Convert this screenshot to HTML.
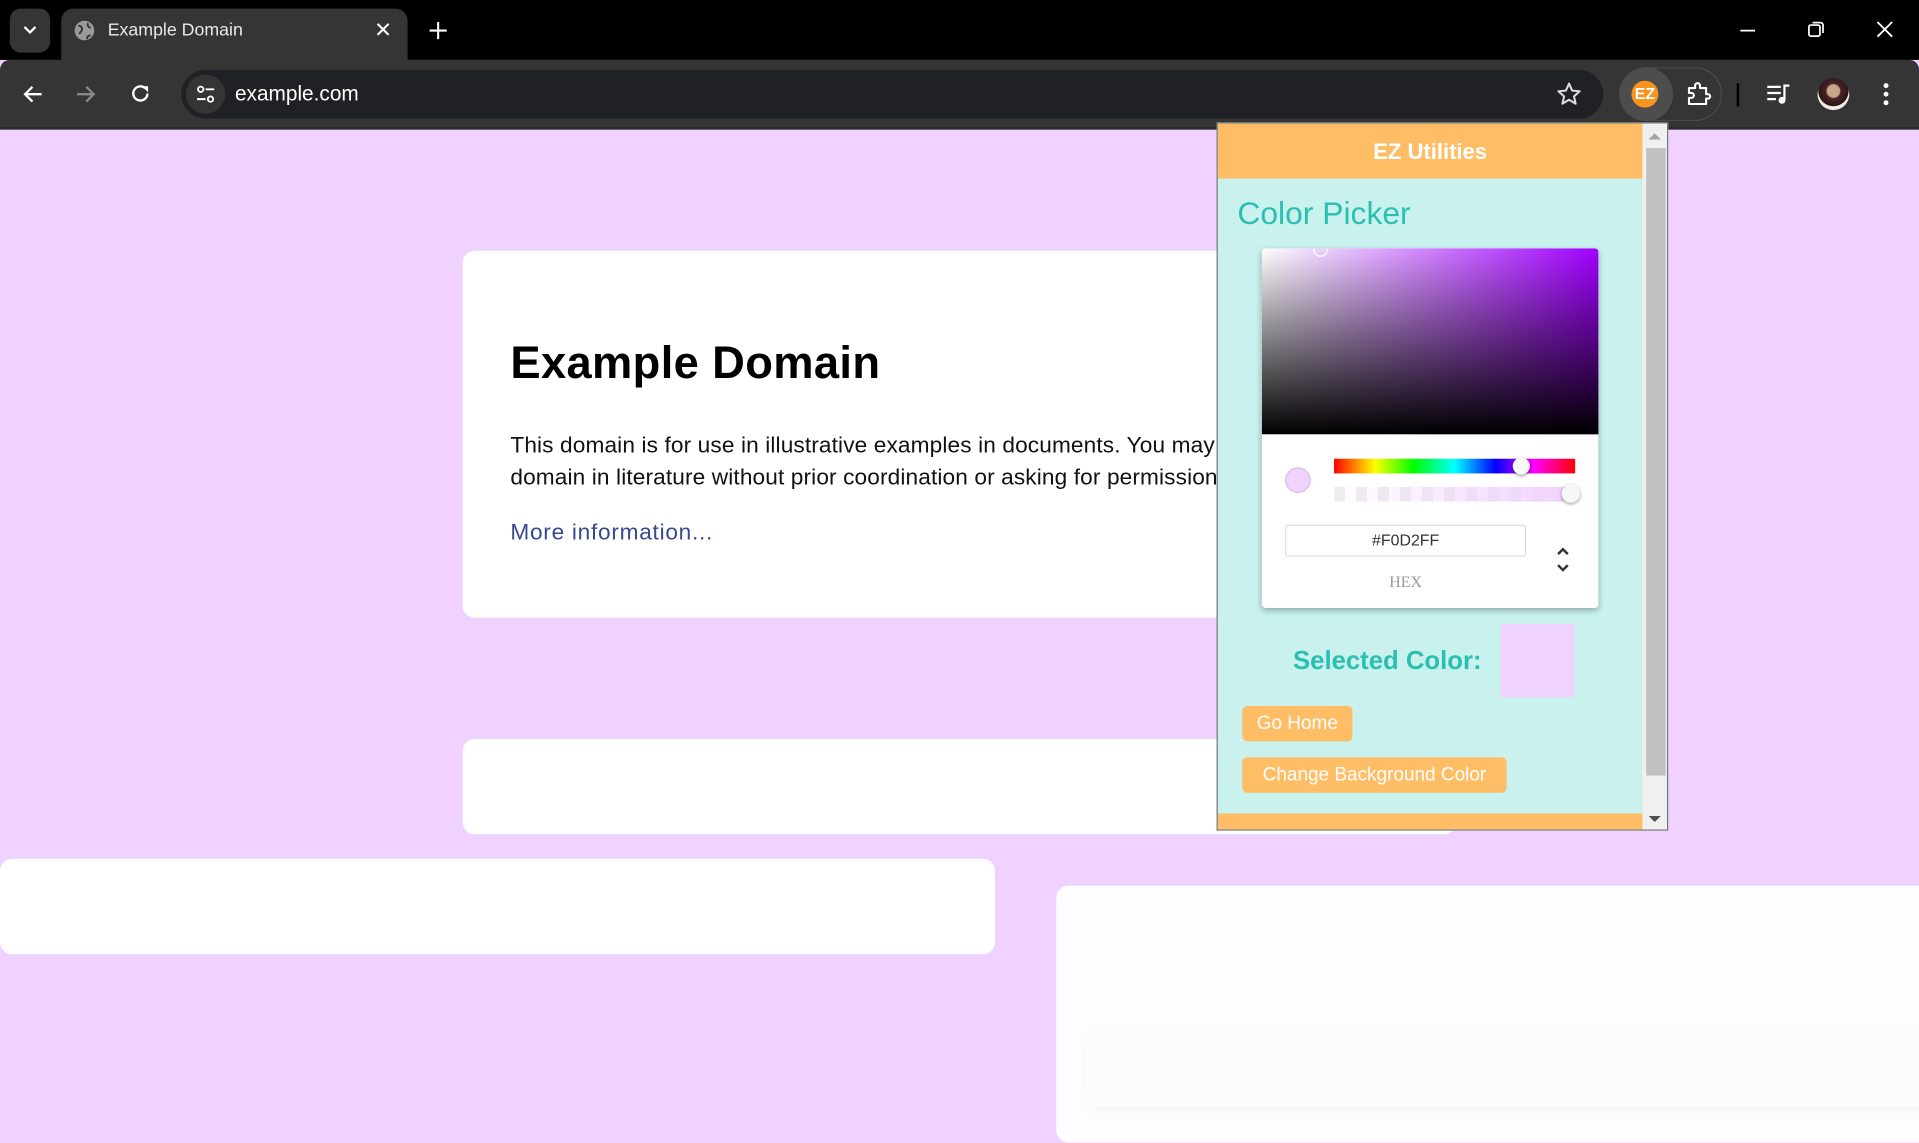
<!DOCTYPE html>
<html><head><meta charset="utf-8"><style>
html,body{margin:0;padding:0;width:1919px;height:1123px;overflow:hidden;background:#efd2ff;}
#s{position:absolute;left:0;top:0;width:1568px;height:918px;transform:scale(1.2239,1.2233);transform-origin:0 0;font-family:"Liberation Sans",sans-serif;}
.a{position:absolute;}
.card{position:absolute;background:#fff;border-radius:10px;}
</style></head><body><div id="s">
<!-- tab bar -->
<div class="a" style="left:0;top:0;width:1568px;height:49px;background:#000;"></div>
<div class="a" style="left:8px;top:7px;width:33px;height:36px;background:#353535;border-radius:9px;"></div>
<svg class="a" style="left:18px;top:19px" width="13" height="10" viewBox="0 0 13 10"><path d="M2 3l4.5 4.5L11 3" stroke="#fff" stroke-width="1.8" fill="none"/></svg>
<div class="a" style="left:50px;top:7px;width:283px;height:44px;background:#353535;border-radius:10px 10px 0 0;"></div>
<svg class="a" style="left:60px;top:16px" width="18" height="18" viewBox="0 0 18 18"><circle cx="9" cy="9" r="8" fill="#9a9a9a"/><path d="M4 5c2 0 3 1 3 3s-2 2-2 4M12 3c-1 2 0 3 2 4M11 16c0-2 1-3 3-3" stroke="#353535" stroke-width="1.6" fill="none"/></svg>
<div class="a" style="left:88px;top:17px;color:#e8e8e8;font-size:14.5px;">Example Domain</div>
<svg class="a" style="left:307px;top:18px" width="12" height="12" viewBox="0 0 12 12"><path d="M1.5 1.5l9 9M10.5 1.5l-9 9" stroke="#fff" stroke-width="1.7"/></svg>
<svg class="a" style="left:350px;top:17px" width="16" height="16" viewBox="0 0 16 16"><path d="M8 1v14M1 8h14" stroke="#fff" stroke-width="1.7"/></svg>
<svg class="a" style="left:1420px;top:17px" width="16" height="16"><path d="M2 8h12" stroke="#fff" stroke-width="1.4"/></svg>
<svg class="a" style="left:1476px;top:16px" width="16" height="16"><rect x="2" y="4.5" width="9" height="9" rx="1.5" fill="none" stroke="#fff" stroke-width="1.4"/><path d="M5 2.5h6.5a2 2 0 0 1 2 2V11" fill="none" stroke="#fff" stroke-width="1.4"/></svg>
<svg class="a" style="left:1532px;top:16px" width="16" height="16"><path d="M2 2l12 12M14 2L2 14" stroke="#fff" stroke-width="1.5"/></svg>
<!-- toolbar -->
<div class="a" style="left:0;top:49px;width:1568px;height:56px;background:#353535;border-radius:8px 8px 0 0;"></div>
<div class="a" style="left:0;top:104px;width:1568px;height:2px;background:#2a2a2a;"></div>
<svg class="a" style="left:17px;top:67px" width="20" height="20" viewBox="0 0 20 20"><path d="M17 10H4M9.5 4L3.5 10l6 6" stroke="#fff" stroke-width="1.9" fill="none"/></svg>
<svg class="a" style="left:60px;top:67px" width="20" height="20" viewBox="0 0 20 20"><path d="M3 10h13M10.5 4l6 6-6 6" stroke="#8a8a8a" stroke-width="1.9" fill="none"/></svg>
<svg class="a" style="left:105px;top:67px" width="20" height="20" viewBox="0 0 20 20"><path d="M15.5 9.5A5.8 5.8 0 1 1 13.5 5" stroke="#fff" stroke-width="1.9" fill="none"/><path d="M11 3.5h5v5z" fill="#fff"/></svg>
<div class="a" style="left:148px;top:57px;width:1162px;height:40px;background:#202124;border-radius:20px;"></div>
<div class="a" style="left:152px;top:61px;width:32px;height:32px;background:#353535;border-radius:16px;"></div>
<svg class="a" style="left:159px;top:68px" width="18" height="18" viewBox="0 0 18 18"><circle cx="5" cy="5" r="2.2" stroke="#fff" stroke-width="1.5" fill="none"/><path d="M9 5h7M2 13h7" stroke="#fff" stroke-width="1.6"/><circle cx="13" cy="13" r="2.2" stroke="#fff" stroke-width="1.5" fill="none"/></svg>
<div class="a" style="left:192px;top:67px;color:#fff;font-size:17px;">example.com</div>
<svg class="a" style="left:1271px;top:66px" width="22" height="22" viewBox="0 0 24 24"><path d="M12 2.5l2.8 6.3 6.7.6-5.1 4.5 1.5 6.6L12 17l-5.9 3.5 1.5-6.6-5.1-4.5 6.7-.6z" stroke="#ddd" stroke-width="1.8" fill="none" stroke-linejoin="round"/></svg>
<div class="a" style="left:1323px;top:55px;width:84px;height:44px;border:1px solid #4a4a4a;border-radius:22px;box-sizing:border-box;"></div>
<div class="a" style="left:1323px;top:55px;width:44px;height:44px;background:#4d4d4d;border-radius:22px;"></div>
<div class="a" style="left:1333px;top:66px;width:22px;height:22px;background:#f7941d;border-radius:11px;color:#fff;font-weight:bold;font-size:13px;line-height:22px;text-align:center;">EZ</div>
<svg class="a" style="left:1377px;top:66px" width="22" height="22" viewBox="0 0 22 22"><path d="M3 6h5V4a2 2 0 0 1 4 0v2h5v5h1.5a1.8 1.8 0 0 1 0 3.6H17V19H3v-5h2a2 2 0 0 0 0-4H3z" stroke="#fff" stroke-width="1.7" fill="none" stroke-linejoin="round"/></svg>
<div class="a" style="left:1419px;top:68px;width:2px;height:19px;background:#000;"></div>
<svg class="a" style="left:1443px;top:67px" width="22" height="20" viewBox="0 0 22 20"><path d="M1 4h11M1 9h11M1 14h7" stroke="#fff" stroke-width="1.8"/><path d="M15 15V3h4" stroke="#fff" stroke-width="1.8" fill="none"/><circle cx="13" cy="15" r="2.8" fill="#fff"/></svg>
<div class="a" style="left:1485px;top:64px;width:26px;height:26px;border-radius:13px;background:radial-gradient(circle at 50% 40%,#c9a58a 0 25%,#4a2426 30%,#2b1418 60%,#f2eae6 62%);"></div>
<svg class="a" style="left:1535px;top:66px" width="12" height="22"><circle cx="6" cy="4" r="2" fill="#fff"/><circle cx="6" cy="11" r="2" fill="#fff"/><circle cx="6" cy="18" r="2" fill="#fff"/></svg>
<!-- page -->
<div class="card" style="left:378px;top:205px;width:812px;height:300px;overflow:hidden;">
 <div class="a" style="left:39px;top:71px;font-size:37px;font-weight:bold;color:#000;white-space:nowrap;letter-spacing:0.3px;">Example Domain</div>
 <div class="a" style="left:39px;top:146px;font-size:18.5px;line-height:26px;color:#111;white-space:nowrap;letter-spacing:0.1px;">This domain is for use in illustrative examples in documents. You may use this<br>domain in literature without prior coordination or asking for permission.</div>
 <div class="a" style="left:39px;top:219px;font-size:18.5px;color:#38488f;white-space:nowrap;letter-spacing:0.6px;">More information...</div>
</div>
<div class="card" style="left:378px;top:604px;width:812px;height:78px;"></div>
<div class="card" style="left:0;top:702px;width:813px;height:78px;"></div>
<div class="card" style="left:863px;top:724px;width:720px;height:210px;background:#fdfdff;"></div>
<div class="a" style="left:887px;top:840px;width:700px;height:65px;background:#fcfcfe;border-radius:8px;box-shadow:0 2px 8px rgba(0,0,0,0.03);"></div>
<!-- popup -->
<div class="a" style="left:994px;top:100px;width:369px;height:579px;background:#c9f2ee;border:1px solid #777;box-sizing:border-box;overflow:hidden;">
 <div class="a" style="left:0;top:0;width:347px;height:45px;background:#ffbe66;color:#fff;font-weight:bold;font-size:18px;line-height:46px;text-align:center;">EZ Utilities</div>
 <div class="a" style="left:16px;top:58px;color:#2bbfb2;font-size:26px;">Color Picker</div>
 <div class="a" style="left:36px;top:102px;width:275px;height:294px;background:#fff;border-radius:3px;box-shadow:0 2px 5px rgba(0,0,0,0.3);overflow:hidden;">
  <div class="a" style="left:0;top:0;width:275px;height:152px;background:linear-gradient(to top,#000,rgba(0,0,0,0)),linear-gradient(to right,#fff,#a000ff);"></div>
  <div class="a" style="left:42px;top:-5px;width:10px;height:10px;border:1.5px solid #fff;border-radius:50%;"></div>
  <div class="a" style="left:19px;top:179px;width:19px;height:19px;border-radius:50%;background:#f0d2ff;border:1px solid #dcb8ee;"></div>
  <div class="a" style="left:59px;top:172px;width:197px;height:12px;background:linear-gradient(to right,#f00,#ff0 17%,#0f0 33%,#0ff 50%,#00f 67%,#f0f 83%,#f00);"></div>
  <div class="a" style="left:205px;top:171px;width:14px;height:14px;border-radius:50%;background:#f8f8f8;box-shadow:0 1px 3px rgba(0,0,0,0.4);"></div>
  <div class="a" style="left:59px;top:195px;width:197px;height:12px;background:linear-gradient(to right,rgba(240,210,255,0),#f0d2ff),repeating-linear-gradient(90deg,#eee 0 9px,#fff 9px 18px);"></div>
  <div class="a" style="left:245px;top:193px;width:15px;height:15px;border-radius:50%;background:#f8f8f8;box-shadow:0 1px 3px rgba(0,0,0,0.4);"></div>
  <div class="a" style="left:19px;top:226px;width:197px;height:26px;border:1px solid #ddd;box-sizing:border-box;border-radius:2px;font-size:13px;color:#333;text-align:center;line-height:24px;">#F0D2FF</div>
  <div class="a" style="left:19px;top:265px;width:197px;text-align:center;font-family:'Liberation Serif',serif;font-size:13px;color:#999;">HEX</div>
  <svg class="a" style="left:240px;top:243px" width="12" height="24" viewBox="0 0 12 24"><path d="M2 7l4-4 4 4M2 16l4 4 4-4" stroke="#333" stroke-width="2" fill="none"/></svg>
 </div>
 <div class="a" style="left:0;top:428px;width:277px;text-align:center;color:#2bbfb2;font-weight:bold;font-size:21px;">Selected Color:</div>
 <div class="a" style="left:231px;top:409px;width:60px;height:60px;background:#f0d2ff;"></div>
 <div class="a" style="left:20px;top:476px;width:90px;height:29px;background:#ffbe66;border-radius:4px;color:#fff;font-size:15.5px;line-height:29px;text-align:center;">Go Home</div>
 <div class="a" style="left:20px;top:518px;width:216px;height:29px;background:#ffbe66;border-radius:4px;color:#fff;font-size:15.5px;line-height:29px;text-align:center;white-space:nowrap;">Change Background Color</div>
 <div class="a" style="left:0;top:564px;width:347px;height:15px;background:#ffbe66;"></div>
 <div class="a" style="left:347px;top:0;width:21px;height:579px;background:#f0f0f0;"></div>
 <div class="a" style="left:350px;top:20px;width:16px;height:513px;background:#c1c1c1;"></div>
 <svg class="a" style="left:352px;top:7px" width="10" height="6"><path d="M0 6L5 1l5 5z" fill="#a3a3a3"/></svg>
 <svg class="a" style="left:352px;top:566px" width="10" height="6"><path d="M0 0l5 5 5-5z" fill="#505050"/></svg>
</div>
</div></body></html>
